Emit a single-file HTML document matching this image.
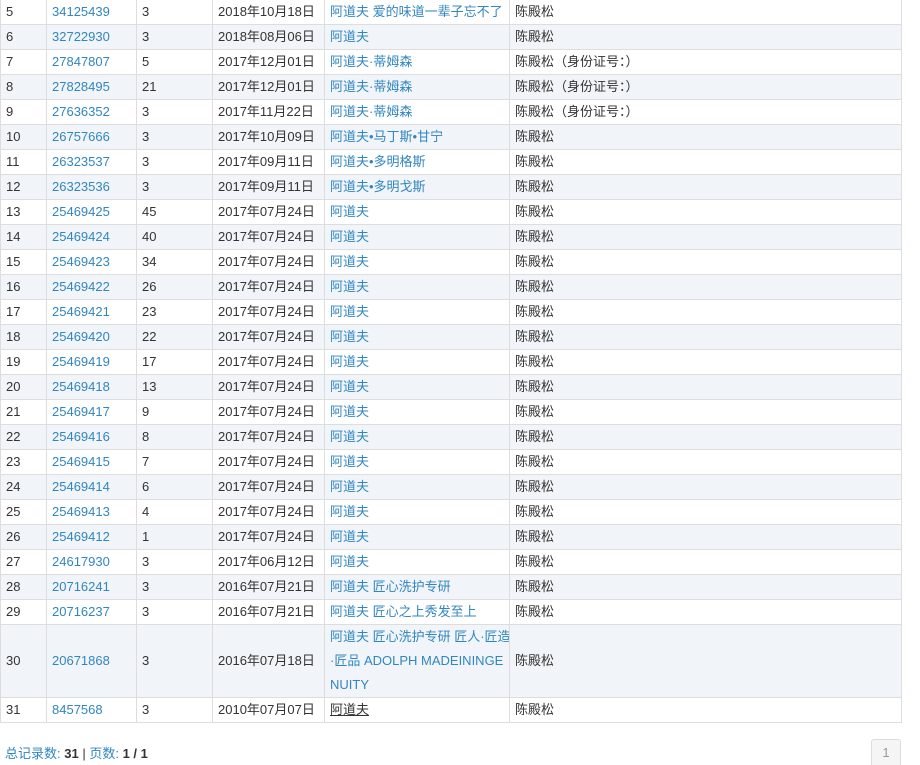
<!DOCTYPE html>
<html><head><meta charset="utf-8">
<style>
html,body{margin:0;padding:0;background:#fff;width:920px;height:765px;overflow:hidden}
body{font-family:"Liberation Sans","Noto Sans CJK SC",sans-serif;font-size:13px;color:#333;position:relative}
table{position:absolute;left:0;top:-1px;border-collapse:collapse;width:901px;table-layout:fixed}
td{border:1px solid #ddd;height:24px;padding:0 0 0 5px;line-height:24px;vertical-align:middle;white-space:nowrap;overflow:hidden}
tr.s td{background:#f1f5f9}
a{color:#3186c0;text-decoration:none}
td.w{line-height:24px}
.foot{position:absolute;left:5px;top:743px;font-size:13px;color:#3186c0}
.foot b{color:#333}
.pg{position:absolute;left:871px;top:739px;width:28px;height:26px;border:1px solid #ddd;border-radius:3px 3px 0 0;background:#f5f5f5;color:#999;text-align:center;line-height:26px;font-size:13px}
</style></head><body>
<table>
<colgroup><col style="width:46px"><col style="width:90px"><col style="width:76px"><col style="width:112px"><col style="width:185px"><col style="width:392px"></colgroup>
<tr><td>5</td><td><a>34125439</a></td><td>3</td><td>2018年10月18日</td><td><a>阿道夫 爱的味道一辈子忘不了</a></td><td>陈殿松</td></tr>
<tr class="s"><td>6</td><td><a>32722930</a></td><td>3</td><td>2018年08月06日</td><td><a>阿道夫</a></td><td>陈殿松</td></tr>
<tr><td>7</td><td><a>27847807</a></td><td>5</td><td>2017年12月01日</td><td><a>阿道夫·蒂姆森</a></td><td>陈殿松（身份证号：）</td></tr>
<tr class="s"><td>8</td><td><a>27828495</a></td><td>21</td><td>2017年12月01日</td><td><a>阿道夫·蒂姆森</a></td><td>陈殿松（身份证号：）</td></tr>
<tr><td>9</td><td><a>27636352</a></td><td>3</td><td>2017年11月22日</td><td><a>阿道夫·蒂姆森</a></td><td>陈殿松（身份证号：）</td></tr>
<tr class="s"><td>10</td><td><a>26757666</a></td><td>3</td><td>2017年10月09日</td><td><a>阿道夫•马丁斯•甘宁</a></td><td>陈殿松</td></tr>
<tr><td>11</td><td><a>26323537</a></td><td>3</td><td>2017年09月11日</td><td><a>阿道夫•多明格斯</a></td><td>陈殿松</td></tr>
<tr class="s"><td>12</td><td><a>26323536</a></td><td>3</td><td>2017年09月11日</td><td><a>阿道夫•多明戈斯</a></td><td>陈殿松</td></tr>
<tr><td>13</td><td><a>25469425</a></td><td>45</td><td>2017年07月24日</td><td><a>阿道夫</a></td><td>陈殿松</td></tr>
<tr class="s"><td>14</td><td><a>25469424</a></td><td>40</td><td>2017年07月24日</td><td><a>阿道夫</a></td><td>陈殿松</td></tr>
<tr><td>15</td><td><a>25469423</a></td><td>34</td><td>2017年07月24日</td><td><a>阿道夫</a></td><td>陈殿松</td></tr>
<tr class="s"><td>16</td><td><a>25469422</a></td><td>26</td><td>2017年07月24日</td><td><a>阿道夫</a></td><td>陈殿松</td></tr>
<tr><td>17</td><td><a>25469421</a></td><td>23</td><td>2017年07月24日</td><td><a>阿道夫</a></td><td>陈殿松</td></tr>
<tr class="s"><td>18</td><td><a>25469420</a></td><td>22</td><td>2017年07月24日</td><td><a>阿道夫</a></td><td>陈殿松</td></tr>
<tr><td>19</td><td><a>25469419</a></td><td>17</td><td>2017年07月24日</td><td><a>阿道夫</a></td><td>陈殿松</td></tr>
<tr class="s"><td>20</td><td><a>25469418</a></td><td>13</td><td>2017年07月24日</td><td><a>阿道夫</a></td><td>陈殿松</td></tr>
<tr><td>21</td><td><a>25469417</a></td><td>9</td><td>2017年07月24日</td><td><a>阿道夫</a></td><td>陈殿松</td></tr>
<tr class="s"><td>22</td><td><a>25469416</a></td><td>8</td><td>2017年07月24日</td><td><a>阿道夫</a></td><td>陈殿松</td></tr>
<tr><td>23</td><td><a>25469415</a></td><td>7</td><td>2017年07月24日</td><td><a>阿道夫</a></td><td>陈殿松</td></tr>
<tr class="s"><td>24</td><td><a>25469414</a></td><td>6</td><td>2017年07月24日</td><td><a>阿道夫</a></td><td>陈殿松</td></tr>
<tr><td>25</td><td><a>25469413</a></td><td>4</td><td>2017年07月24日</td><td><a>阿道夫</a></td><td>陈殿松</td></tr>
<tr class="s"><td>26</td><td><a>25469412</a></td><td>1</td><td>2017年07月24日</td><td><a>阿道夫</a></td><td>陈殿松</td></tr>
<tr><td>27</td><td><a>24617930</a></td><td>3</td><td>2017年06月12日</td><td><a>阿道夫</a></td><td>陈殿松</td></tr>
<tr class="s"><td>28</td><td><a>20716241</a></td><td>3</td><td>2016年07月21日</td><td><a>阿道夫 匠心洗护专研</a></td><td>陈殿松</td></tr>
<tr><td>29</td><td><a>20716237</a></td><td>3</td><td>2016年07月21日</td><td><a>阿道夫 匠心之上秀发至上</a></td><td>陈殿松</td></tr>
<tr class="s"><td style="height:72px">30</td><td><a>20671868</a></td><td>3</td><td>2016年07月18日</td><td class="w"><a>阿道夫 匠心洗护专研 匠人·匠造<br>·匠品 ADOLPH MADEININGE<br>NUITY</a></td><td>陈殿松</td></tr>
<tr><td>31</td><td><a>8457568</a></td><td>3</td><td>2010年07月07日</td><td><a style="color:#333;text-decoration:underline">阿道夫</a></td><td>陈殿松</td></tr>
</table>
<div class="foot">总记录数: <b>31</b> <span style="color:#333">|</span> 页数: <b>1 / 1</b></div>
<div class="pg">1</div>
</body></html>
